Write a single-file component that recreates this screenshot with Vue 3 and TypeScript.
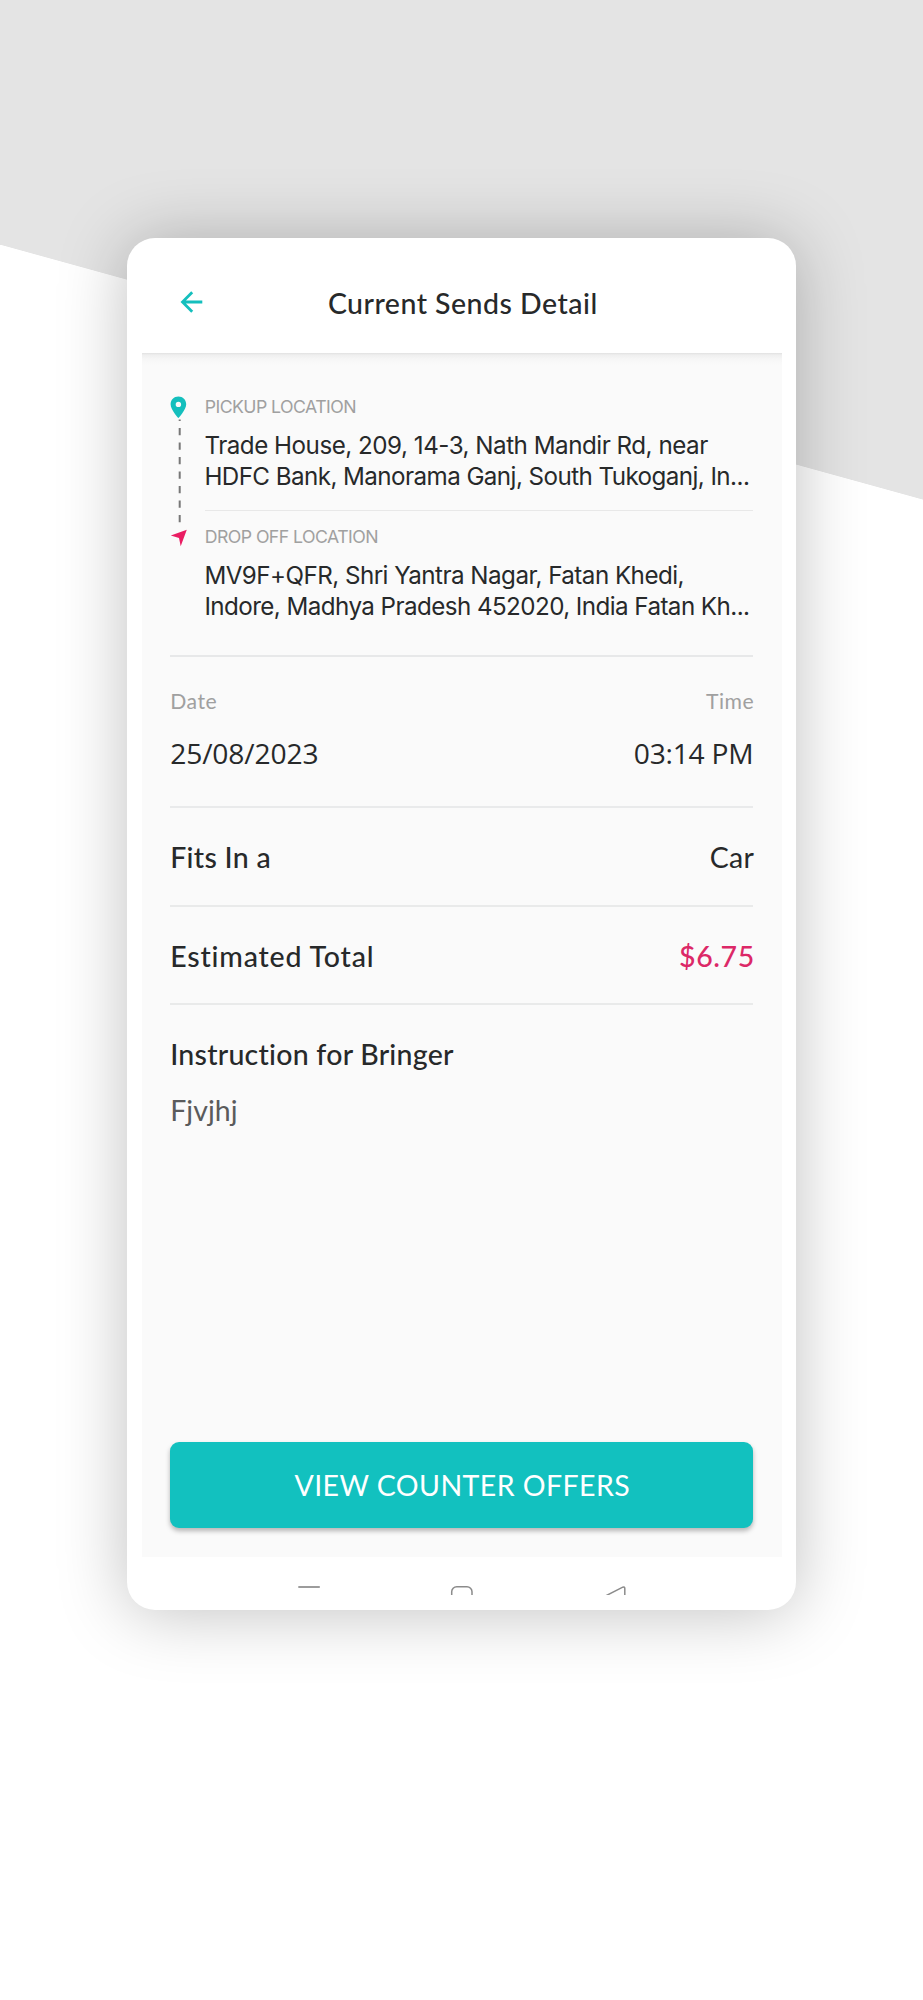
<script setup lang="ts">
interface Stop {
  kind: string
  label: string
  lines: string[]
}

const stops: Stop[] = [
  {
    kind: 'pickup',
    label: 'PICKUP LOCATION',
    lines: ['Trade House, 209, 14-3, Nath Mandir Rd, near', 'HDFC Bank, Manorama Ganj, South Tukoganj, In...'],
  },
  {
    kind: 'dropoff',
    label: 'DROP OFF LOCATION',
    lines: ['MV9F+QFR, Shri Yantra Nagar, Fatan Khedi,', 'Indore, Madhya Pradesh 452020, India Fatan Kh...'],
  },
]
</script>

<template>
  <div class="page">
    <main class="card">
      <header class="header">
        <button class="back" aria-label="Back">
          <svg width="24" height="24" viewBox="0 0 24 24" fill="none">
            <path d="M22.3 12H2.6M12.2 2.3L2.5 12l9.700 9.700" stroke="#14bfbd" stroke-width="2.800" />
          </svg>
        </button>
        <h1 class="title">Current Sends Detail</h1>
      </header>

      <section class="screen">
        <div class="route">
          <svg class="rail" width="18" height="155" viewBox="0 0 18 155">
            <path d="M9.700 24.500v1.500M9.700 33v97" stroke="#777" stroke-width="2" stroke-dasharray="7.300 7.200" />
            <path
              d="M8.4 1.6C4 1.6.6 5 .6 9.3c0 5.6 7.8 13.8 7.8 13.8s7.8-8.2 7.8-13.8C16.2 5 12.8 1.6 8.4 1.6zm0 5.100a2.700 2.700 0 1 1 0 5.400 2.700 2.700 0 0 1 0-5.400z"
              fill="#14bfbd"
              fill-rule="evenodd"
            />
            <path d="M16.800 134.700L.8 140.400l8.200 2.600 1.700 8.300z" fill="#ea1d63" />
          </svg>
          <div class="stops">
            <div v-for="stop in stops" :key="stop.kind" class="stop" :class="stop.kind">
              <p class="stop-label">{{ stop.label }}</p>
              <p v-for="line in stop.lines" :key="line" class="address">{{ line }}</p>
            </div>
          </div>
        </div>

        <div class="schedule">
          <div>
            <p class="caption">Date</p>
            <p class="moment">25/08/2023</p>
          </div>
          <div class="right">
            <p class="caption">Time</p>
            <p class="moment time">03:14 PM</p>
          </div>
        </div>

        <div class="row">
          <span class="name fits">Fits In a</span>
          <span class="value">Car</span>
        </div>
        <div class="row">
          <span class="name total">Estimated Total</span>
          <span class="price">$6.75</span>
        </div>

        <div class="notes">
          <h2 class="name instruction">Instruction for Bringer</h2>
          <p class="note">Fjvjhj</p>
        </div>

        <button class="cta">VIEW COUNTER OFFERS</button>
      </section>

      <nav class="system-nav">
        <svg width="24" height="10" viewBox="0 0 24 10"><path d="M1.300 2h21.500" stroke="#8b8b8b" stroke-width="1.700" /></svg>
        <svg width="24" height="10" viewBox="0 0 24 10" fill="none">
          <rect x="1.700" y="1.700" width="20.300" height="20" rx="5" stroke="#8b8b8b" stroke-width="1.500" />
        </svg>
        <svg width="24" height="10" viewBox="0 0 24 10" fill="none">
          <path d="M1 11.200L18.800 2.200q2-.9 2 1.300V12" stroke="#8b8b8b" stroke-width="1.500" />
        </svg>
      </nav>
    </main>
  </div>
</template>

<style>
html,
body {
  margin: 0;
  background: #fff;
}
</style>

<style scoped>
.page {
  box-sizing: border-box;
  width: 923px;
  height: 2000px;
  padding: 238px 0 0 127.400px;
  overflow: hidden;
  background: #fff;
  background-image: linear-gradient(to top right, transparent 50%, #e4e4e4 50.150%), linear-gradient(#e4e4e4, #e4e4e4);
  background-size: 923px 255px, 923px 245px;
  background-position: 0 245px, 0 0;
  background-repeat: no-repeat;
  font-family: Lato, "Open Sans", sans-serif;
  color: #27292a;
}
h1,
h2,
p {
  margin: 0;
  font-weight: 400;
}
button {
  padding: 0;
  border: 0;
  background: none;
  font: inherit;
}
.card {
  box-sizing: border-box;
  width: 668.800px;
  height: 1372px;
  padding: 0 14.300px;
  border-radius: 28px;
  background: #fff;
  box-shadow: 0 2px 68px rgba(0, 0, 0, 0.25);
}
.header {
  display: grid;
  grid-template-columns: 100px 1fr 100px;
  align-items: center;
  height: 115px;
  padding-top: 14px;
  box-sizing: border-box;
}
.back {
  display: flex;
  height: 24px;
  margin: -1px 0 0 38.500px;
}
.title {
  height: 40px;
  margin-top: 1px;
  padding-left: 2px;
  font-size: 28.500px;
  font-weight: 500;
  line-height: 40px;
  letter-spacing: 0.480px;
  text-align: center;
  white-space: nowrap;
}
.screen {
  box-sizing: border-box;
  display: flex;
  flex-direction: column;
  height: 1204px;
  padding: 0 28.500px;
  background: linear-gradient(#e1e1e1, #efefef 2px, #f6f6f6 6px, #fafafa 12px);
}
.route {
  box-sizing: border-box;
  display: flex;
  height: 304px;
  padding-top: 42px;
  border-bottom: 2px solid #e7e8e9;
}
.rail {
  flex: none;
  width: 18px;
  margin-right: 16.700px;
}
.stops {
  flex: 1;
  min-width: 0;
  font-family: Inter, "Liberation Sans", sans-serif;
}
.pickup {
  padding-bottom: 18px;
  border-bottom: 1px solid #e8e8e8;
}
.dropoff {
  padding-top: 14px;
}
.stop-label {
  height: 24px;
  margin: 0 0 11px -0.200px;
  font-size: 17.700px;
  line-height: 24px;
  letter-spacing: -0.550px;
  color: #a0a0a0;
}
.address {
  height: 31px;
  margin-left: -0.500px;
  font-size: 24.200px;
  line-height: 31px;
  letter-spacing: -0.570px;
  white-space: nowrap;
}
.pickup .stop-label + .address {
  letter-spacing: -0.490px;
}
.dropoff .stop-label + .address {
  letter-spacing: -0.540px;
}
.schedule {
  box-sizing: border-box;
  display: flex;
  justify-content: space-between;
  height: 151px;
  padding-top: 31px;
  border-bottom: 2px solid #e9eaeb;
}
.right {
  text-align: right;
}
.caption {
  height: 26px;
  margin-bottom: 19.400px;
  font-size: 21.200px;
  line-height: 26px;
  letter-spacing: 0.500px;
  color: #a0a0a0;
}
.right .caption {
  margin-right: -0.800px;
}
.moment {
  font-family: "Open Sans", sans-serif;
  font-size: 28.200px;
  line-height: 40px;
  letter-spacing: -0.130px;
}
.moment.time {
  letter-spacing: -0.240px;
}
.row {
  box-sizing: border-box;
  display: flex;
  justify-content: space-between;
  height: 98.500px;
  padding-top: 29.300px;
  border-bottom: 2px solid #e9eaea;
  font-size: 28.500px;
  line-height: 40px;
}
.name {
  font-size: 28.500px;
  font-weight: 500;
  line-height: 40px;
}
.fits {
  letter-spacing: 0.300px;
}
.total {
  letter-spacing: 0.820px;
}
.value {
  margin-right: -0.800px;
  letter-spacing: 0.300px;
}
.price {
  margin-right: -1.500px;
  font-weight: 500;
  letter-spacing: 0.600px;
  color: #dc2867;
}
.notes {
  padding-top: 28.800px;
}
.instruction {
  letter-spacing: 0.250px;
}
.note {
  margin-top: 16.500px;
  font-size: 28.500px;
  line-height: 40px;
  letter-spacing: 0.050px;
  color: #5a5b5c;
}
.cta {
  height: 86.300px;
  margin-top: auto;
  margin-bottom: 28.700px;
  padding-left: 1px;
  border-radius: 9px;
  background: #12c1bf;
  box-shadow: 0 3px 5px rgba(0, 0, 0, 0.280);
  font-size: 28.500px;
  letter-spacing: 0.420px;
  color: #fff;
}
.system-nav {
  display: flex;
  justify-content: center;
  gap: 129.500px;
  padding: 28px 0 0 1px;
}
</style>
